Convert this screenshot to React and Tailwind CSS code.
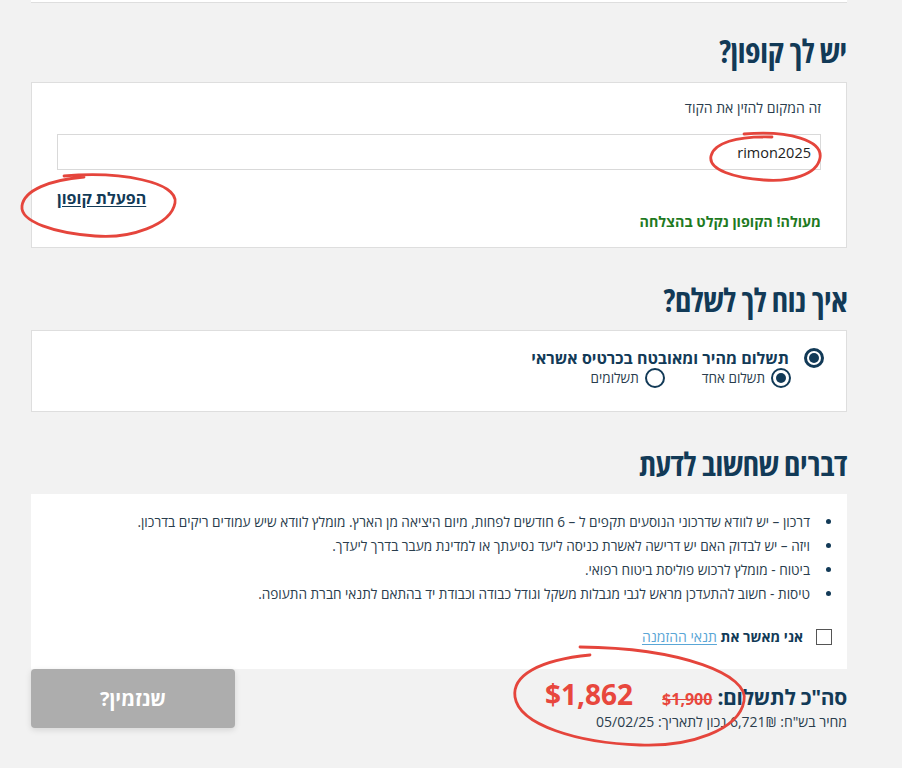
import { useState } from "react";

const navy = "text-[#123a57]";
const heading = "text-[32px] font-bold leading-[36px] tracking-[-0.3px] font-stretch-condensed text-[#123a57]";

function Radio({ checked, size = "big" }) {
  const outer = size === "big" ? "h-[20px] w-[20px] border-[3px]" : "h-[20px] w-[20px] border-[2px]";
  return (
    <span className={`flex shrink-0 items-center justify-center rounded-full border-[#123a57] bg-white ${outer}`}>
      {checked && <span className="h-[10px] w-[10px] rounded-full bg-[#123a57]" />}
    </span>
  );
}

function Scribbles() {
  return (
    <svg className="pointer-events-none absolute inset-0 h-full w-full" width="902" height="768" fill="none">
      <g stroke="#e5453c" strokeWidth="2.8" strokeLinecap="round">
        <path d="M744 134 C790 130 823 141 820 158 C817 175 790 182 764 180 C735 178 708 170 711 156 C714 143 736 136 772 137" />
        <path d="M64 176 C120 171 179 182 175 203 C171 225 130 239 95 236 C55 233 20 222 22 206 C24 190 50 180 84 177" />
        <path d="M580 647 C682 648 750 675 744 701 C739 730 690 747 640 745 C578 743 519 725 515 697 C512 676 538 660 590 655" />
      </g>
    </svg>
  );
}

export default function App() {
  const [coupon, setCoupon] = useState("rimon2025");
  const [plan, setPlan] = useState("one");
  const [agree, setAgree] = useState(false);

  return (
    <div dir="rtl" className="relative min-h-[768px] bg-[#f2f2f2] font-['Open_Sans','DejaVu_Sans','Liberation_Sans',sans-serif]">
      <div className="ml-[31px] mr-[55px]">
        <div className="h-[3px] border-b border-[#dedede] bg-white" />

        <h2 className={`mt-[30px] ${heading}`}>יש לך קופון?</h2>
        <section className="mt-[13px] border border-[#dedede] bg-white px-[25px] pb-[15px] pt-[15px]">
          <label className="block text-[14px] leading-[20px] text-[#2a3d4d]">זה המקום להזין את הקוד</label>
          <input
            className="mt-[16px] block h-[36px] w-full border border-[#d9d9d9] px-[9px] text-[14.5px] text-[#222] outline-none"
            value={coupon}
            onChange={(e) => setCoupon(e.target.value)}
          />
          <div className="mt-[18px] flex justify-end">
            <button className={`text-[16px] font-bold leading-[20px] underline underline-offset-2 ${navy}`}>הפעלת קופון</button>
          </div>
          <p className="mt-[4px] text-[14.3px] font-bold leading-[20px] text-[#1f7a1f]">מעולה! הקופון נקלט בהצלחה</p>
        </section>

        <h2 className={`mt-[34px] ${heading}`}>איך נוח לך לשלם?</h2>
        <section className="mt-[12px] border border-[#dedede] bg-white pb-[23px] pr-[22px] pt-[17px]">
          <div className="flex items-center gap-[15px]">
            <Radio checked />
            <span className={`text-[16px] font-bold leading-[20px] ${navy}`}>תשלום מהיר ומאובטח בכרטיס אשראי</span>
          </div>
          <div className="mr-[33px] flex items-center gap-[37px]">
            <button className="flex items-center gap-[6px]" onClick={() => setPlan("one")}>
              <Radio checked={plan === "one"} size="small" />
              <span className="text-[13.5px] leading-[20px] text-[#2a3d4d]">תשלום אחד</span>
            </button>
            <button className="flex items-center gap-[6px]" onClick={() => setPlan("many")}>
              <Radio checked={plan === "many"} size="small" />
              <span className="text-[13.5px] leading-[20px] text-[#2a3d4d]">תשלומים</span>
            </button>
          </div>
        </section>

        <h2 className={`mt-[34px] ${heading}`}>דברים שחשוב לדעת</h2>
        <section className="mt-[12px] bg-white pb-[22px] pl-[10px] pt-[16px]">
          <ul className="list-disc pr-[33px] text-[13.6px] leading-[24px] text-[#2a3d4d] marker:text-[#123a57]">
            <li className="pr-[4px]">דרכון – יש לוודא שדרכוני הנוסעים תקפים ל – 6 חודשים לפחות, מיום היציאה מן הארץ. מומלץ לוודא שיש עמודים ריקים בדרכון.</li>
            <li className="pr-[4px]">ויזה – יש לבדוק האם יש דרישה לאשרת כניסה ליעד נסיעתך או למדינת מעבר בדרך ליעדך.</li>
            <li className="pr-[4px]">ביטוח - מומלץ לרכוש פוליסת ביטוח רפואי.</li>
            <li className="pr-[4px]">טיסות - חשוב להתעדכן מראש לגבי מגבלות משקל וגודל כבודה וכבודת יד בהתאם לתנאי חברת התעופה.</li>
          </ul>
          <label className="mr-[15px] mt-[21px] flex items-center gap-[13px]">
            <input
              type="checkbox"
              checked={agree}
              onChange={(e) => setAgree(e.target.checked)}
              className="h-[16px] w-[16px] appearance-none border border-[#555] bg-white"
            />
            <span className="text-[14px] leading-[20px]">
              <b className={navy}>אני מאשר את</b>{" "}
              <a href="#" className="text-[#5aa6d6] underline underline-offset-2">תנאי ההזמנה</a>
            </span>
          </label>
        </section>

        <div className="flex items-start justify-between">
          <div className="pt-[4px]">
            <div className="flex items-baseline">
              <span className={`text-[21px] font-bold leading-[30px] tracking-[-0.3px] ${navy}`}>סה"כ לתשלום:</span>
              <span className="mr-[5px] text-[16px] font-bold text-[#e8473d] line-through" dir="ltr">$1,900</span>
              <span className="mr-[29px] text-[28px] font-bold text-[#e8473d]" dir="ltr">$1,862</span>
            </div>
            <p className="mt-[-2px] text-[14px] leading-[18px] text-[#2a3d4d]">מחיר בש"ח: 6,721₪ נכון לתאריך: 05/02/25</p>
          </div>
          <button
            disabled={!agree}
            className="h-[59px] w-[204px] rounded-[4px] bg-[#adadad] text-[20px] font-bold text-white shadow-[0_2px_6px_rgba(0,0,0,0.12)]"
          >
            שנזמין?
          </button>
        </div>
      </div>
      <Scribbles />
    </div>
  );
}
